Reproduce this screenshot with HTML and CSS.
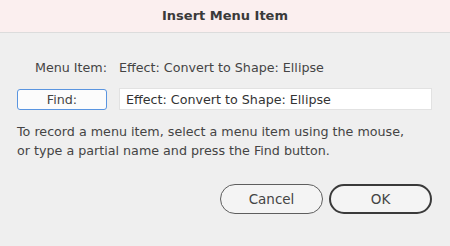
FILE: index.html
```html
<!DOCTYPE html>
<html lang="en">
<head>
    <meta charset="UTF-8">
    <title>Insert Menu Item</title>
    <link rel="stylesheet" href="styles.css">
</head>
<body>
    <div class="dialog">
        <div class="titlebar">Insert Menu Item</div>

        <div class="content">
            <div class="row">
                <span class="label">Menu Item:</span>
                <span class="value">Effect: Convert to Shape: Ellipse</span>
            </div>

            <div class="row find-row">
                <button class="find-btn">Find:</button>
                <input class="find-input" type="text" value="Effect: Convert to Shape: Ellipse">
            </div>

            <p class="hint">To record a menu item, select a menu item using the mouse,<br>or type a partial name and press the Find button.</p>

            <div class="actions">
                <button class="pill">Cancel</button>
                <button class="pill default">OK</button>
            </div>
        </div>
    </div>
</body>
</html>
```

FILE: styles.css
```css
body {
    margin: 0;
    font-family: 'DejaVu Sans', Verdana, sans-serif;
    background-color: #efefef;
    color: #444;
}

.dialog {
    height: 246px;
    display: flex;
    flex-direction: column;
    background-color: #efefef;
}

.titlebar {
    height: 32px;
    line-height: 32px;
    text-align: center;
    font-weight: bold;
    font-size: 13px;
    color: #3a3a3a;
    background-color: #fbefef;
    border-bottom: 1px solid #dcdcdc;
}

.content {
    padding: 27px 18px 0 17px;
}

.row {
    display: flex;
    align-items: center;
    font-size: 12.7px;
}

.label {
    width: 90px;
    text-align: right;
    margin-right: 12px;
}

.find-row {
    margin-top: 13px;
}

.find-btn {
    width: 90px;
    height: 21px;
    margin-right: 12px;
    padding: 0;
    border: 1px solid #5a95e0;
    border-radius: 3px;
    background-color: #fcfcfc;
    font-family: inherit;
    font-size: 12.7px;
    color: #444;
}

.find-input {
    flex: 1;
    height: 22px;
    box-sizing: border-box;
    padding: 0 6px;
    border: 1px solid #e2e2e2;
    background-color: #fff;
    font-family: inherit;
    font-size: 12.7px;
    color: #333;
}

.hint {
    margin: 12px 0 0;
    font-size: 12.7px;
    line-height: 19px;
}

.actions {
    display: flex;
    justify-content: flex-end;
    gap: 6px;
    margin-top: 24px;
}

.pill {
    width: 103px;
    height: 30px;
    border: 1px solid #5e5e5e;
    border-radius: 15px;
    background-color: #f4f4f4;
    font-family: inherit;
    font-size: 13.5px;
    color: #444;
}

.pill.default {
    border: 2px solid #3a3a3a;
}
```
